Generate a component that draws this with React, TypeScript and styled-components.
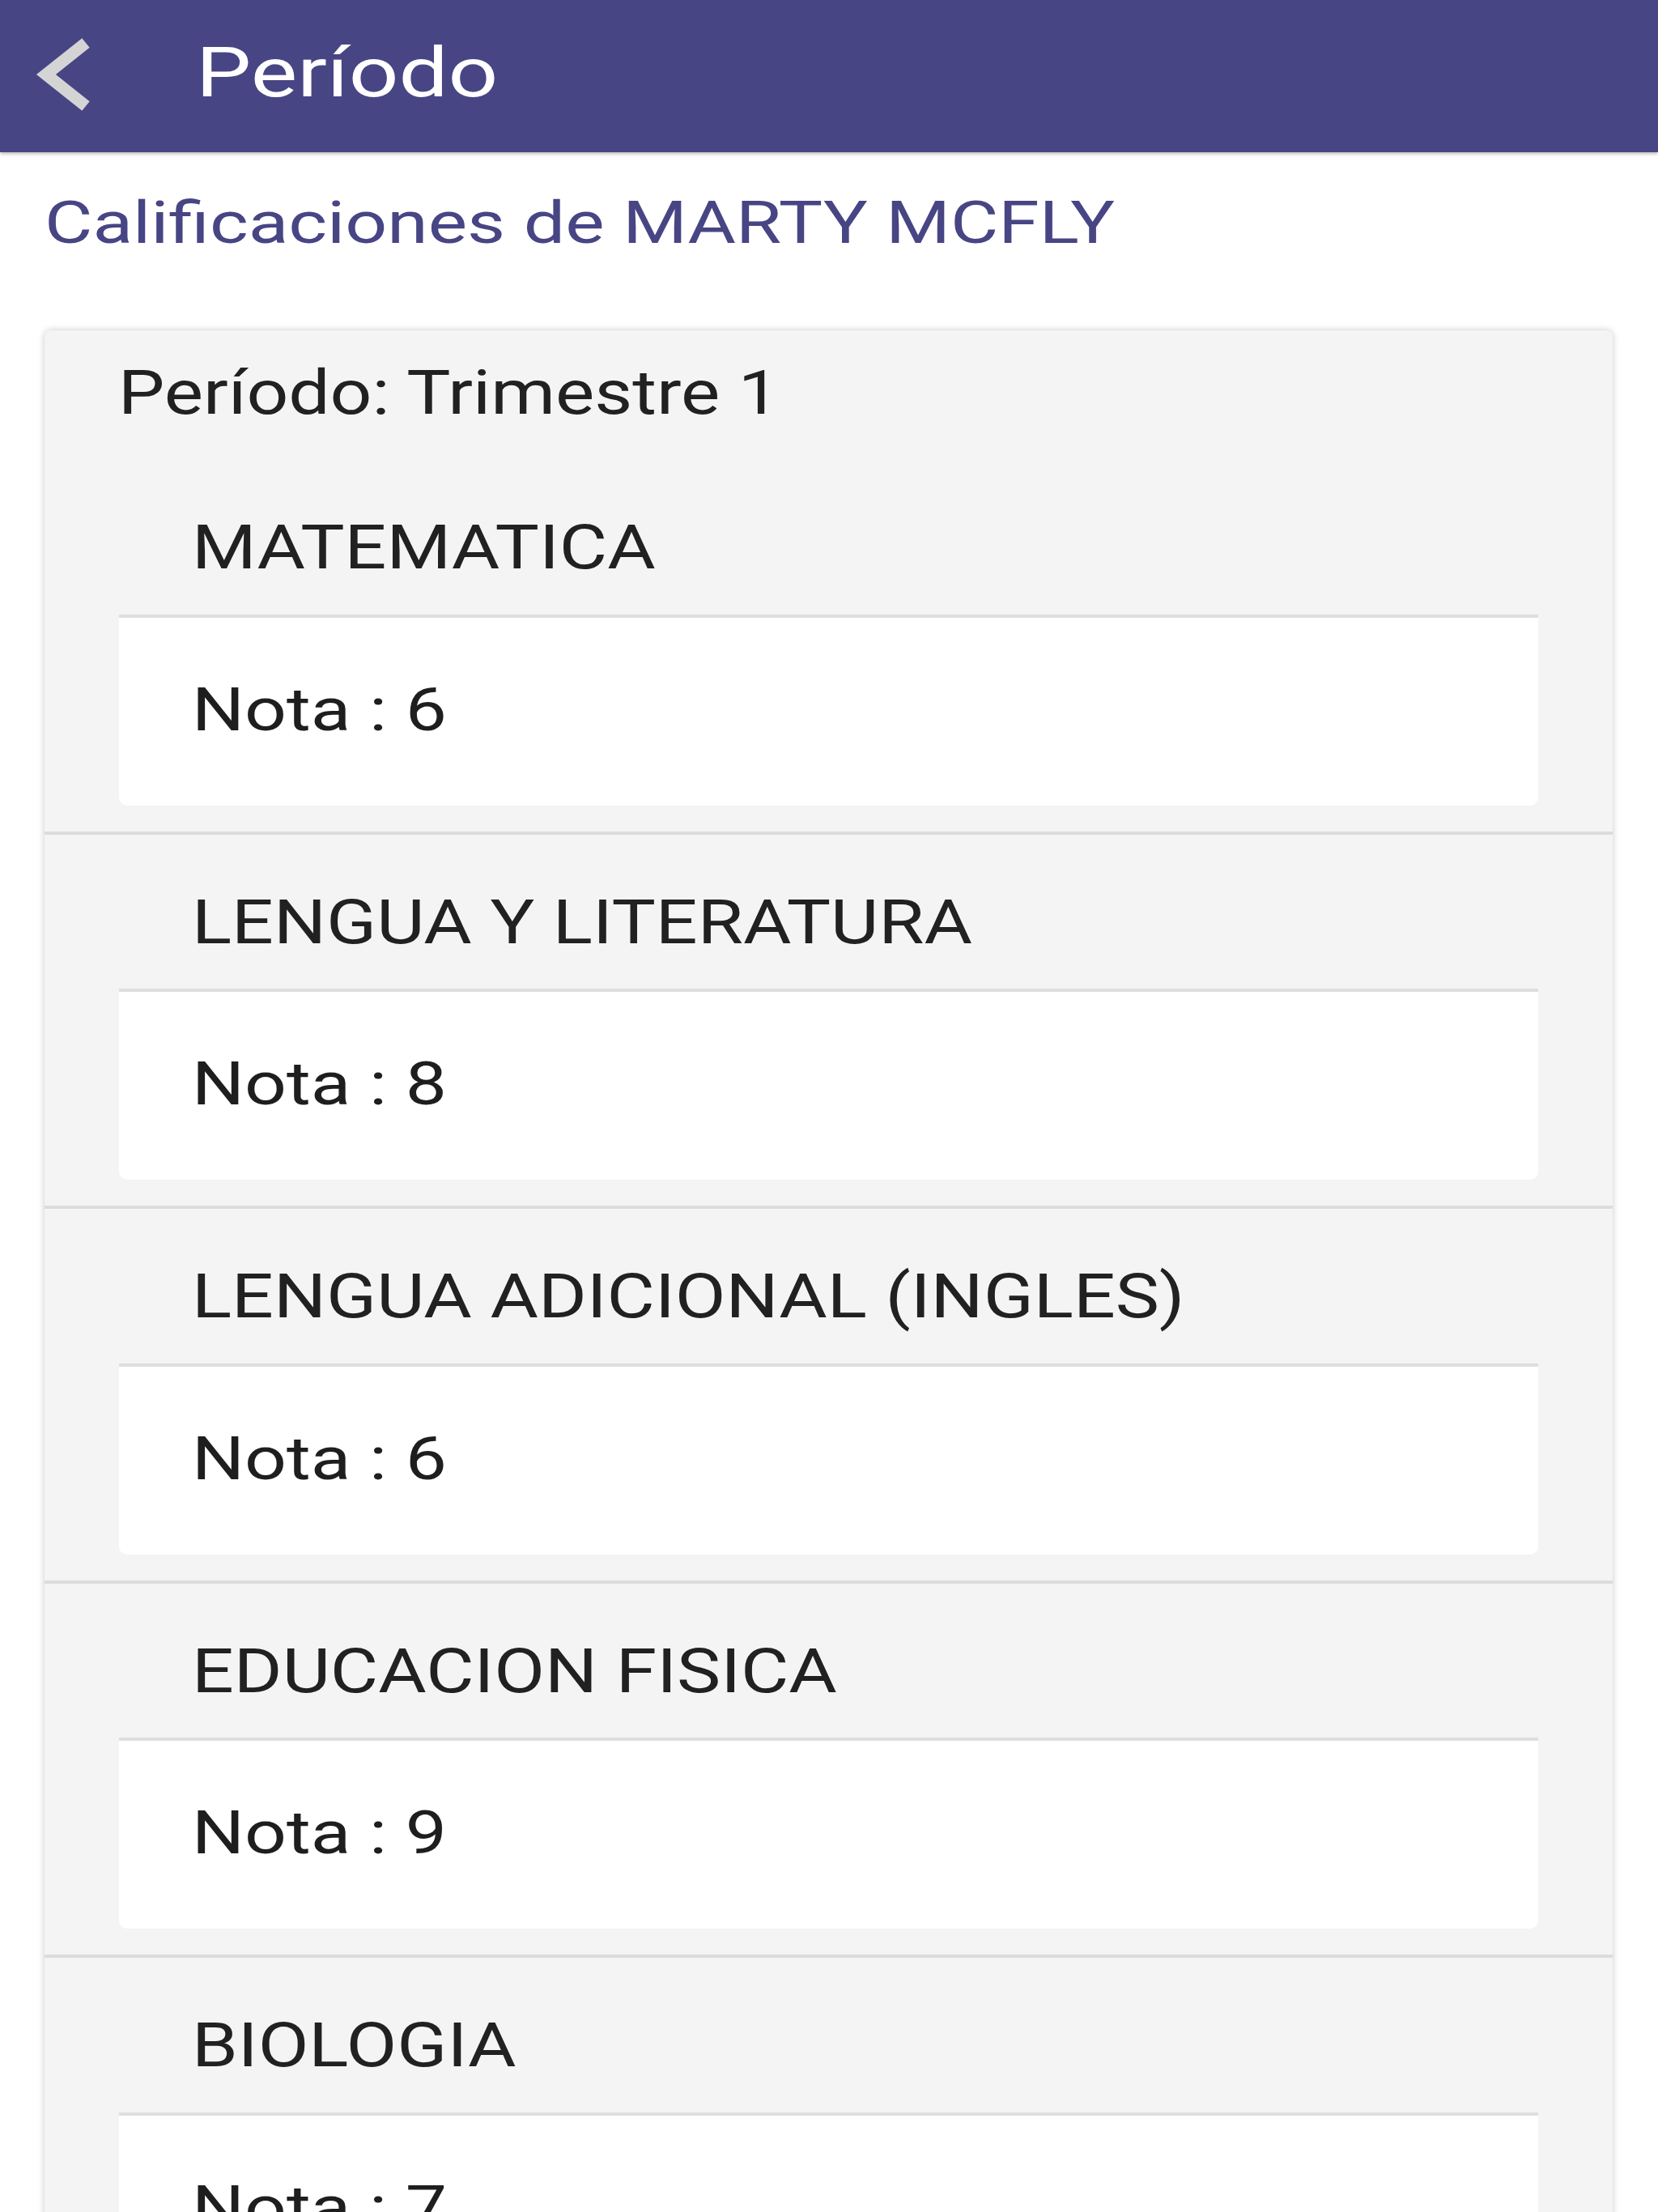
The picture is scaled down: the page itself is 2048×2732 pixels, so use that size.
import React from "react";
import styled, { createGlobalStyle } from "styled-components";

const GlobalStyle = createGlobalStyle`
  html, body {
    margin: 0;
    padding: 0;
    background: #ffffff;
  }
  body {
    font-family: Roboto, "Noto Sans", "Liberation Sans", sans-serif;
    -webkit-font-smoothing: antialiased;
  }
`;

const Page = styled.div`
  height: 100vh;
  overflow: hidden;
  display: flex;
  flex-direction: column;
  background: #ffffff;
`;

const AppBar = styled.header`
  flex: none;
  height: 188px;
  background: #474584;
  display: flex;
  align-items: center;
  padding-left: 40px;
  box-shadow: 0 2px 4px rgba(0, 0, 0, 0.28);
  position: relative;
  z-index: 1;
`;

const BackButton = styled.button`
  flex: none;
  width: 80px;
  height: 100px;
  padding: 0;
  margin: 0;
  border: none;
  background: transparent;
  display: flex;
  cursor: pointer;
`;

const Wide = styled.span<{ $sx: number }>`
  display: inline-block;
  white-space: nowrap;
  transform: scaleX(${(p) => p.$sx});
  transform-origin: left center;
`;

const AppTitle = styled.h1`
  margin: 0 0 9px 122px;
  font-size: 86px;
  font-weight: 400;
  line-height: 1;
  color: #ffffff;
`;

const Subtitle = styled.h2`
  margin: 46px 0 0 55px;
  font-size: 72px;
  font-weight: 400;
  line-height: 1.172;
  color: #474584;
`;

const Card = styled.section`
  margin: 90px 56px 0 55px;
  background: #f4f4f4;
  border-radius: 8px 8px 0 0;
  box-shadow: 0 0 8px rgba(0, 0, 0, 0.22);
`;

const CardHeader = styled.div`
  padding: 33px 0 38px 91px;
  font-size: 76px;
  line-height: 89px;
  color: #212121;
`;

const Subject = styled.div`
  padding: 64px 92px 32px;
  border-bottom: 4px solid #dcdcdc;
`;

const SubjectTitle = styled.div`
  padding-left: 90px;
  margin-bottom: 37.5px;
  font-size: 76px;
  line-height: 89px;
  color: #212121;
`;

const GradeBox = styled.div`
  background: #ffffff;
  border-top: 4px solid #dedede;
  border-radius: 0 0 10px 10px;
  padding: 69px 88px 75px 90px;
  font-size: 75px;
  line-height: 88px;
  color: #1e1e1e;
`;

const subjects = [
  { name: "MATEMATICA", grade: 6 },
  { name: "LENGUA Y LITERATURA", grade: 8 },
  { name: "LENGUA ADICIONAL (INGLES)", grade: 6 },
  { name: "EDUCACION FISICA", grade: 9 },
  { name: "BIOLOGIA", grade: 7 },
];

const BackIcon = () => (
  <svg width="80" height="100" viewBox="0 0 80 100" aria-hidden="true">
    <polyline
      points="66,9 17,48 66,87"
      fill="none"
      stroke="#d4d4d4"
      strokeWidth="15"
      strokeLinecap="butt"
      strokeLinejoin="miter"
    />
  </svg>
);

export default function App() {
  return (
    <>
      <GlobalStyle />
      <Page>
        <AppBar>
          <BackButton aria-label="Volver">
            <BackIcon />
          </BackButton>
          <AppTitle>
            <Wide $sx={1.26}>Período</Wide>
          </AppTitle>
        </AppBar>
        <Subtitle>
          <Wide $sx={1.267}>Calificaciones de MARTY MCFLY</Wide>
        </Subtitle>
        <Card>
          <CardHeader>
            <Wide $sx={1.197}>Período: Trimestre 1</Wide>
          </CardHeader>
          {subjects.map((s) => (
            <Subject key={s.name}>
              <SubjectTitle>
                <Wide $sx={1.2}>{s.name}</Wide>
              </SubjectTitle>
              <GradeBox>
                <Wide $sx={1.215}>Nota : {s.grade}</Wide>
              </GradeBox>
            </Subject>
          ))}
        </Card>
      </Page>
    </>
  );
}
